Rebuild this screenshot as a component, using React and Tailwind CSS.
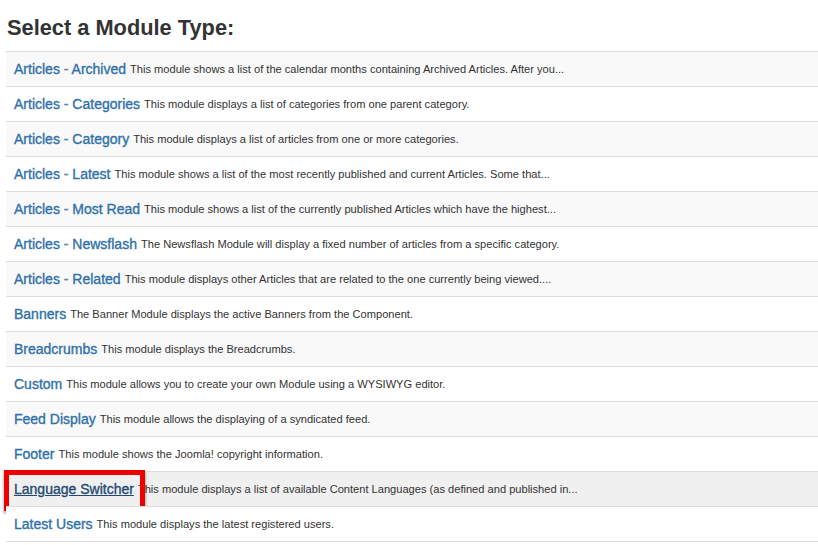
import React from 'react';

const modules = [
  ['Articles', 'Archived', 'This module shows a list of the calendar months containing Archived Articles. After you...'],
  ['Articles', 'Categories', 'This module displays a list of categories from one parent category.'],
  ['Articles', 'Category', 'This module displays a list of articles from one or more categories.'],
  ['Articles', 'Latest', 'This module shows a list of the most recently published and current Articles. Some that...'],
  ['Articles', 'Most Read', 'This module shows a list of the currently published Articles which have the highest...'],
  ['Articles', 'Newsflash', 'The Newsflash Module will display a fixed number of articles from a specific category.'],
  ['Articles', 'Related', 'This module displays other Articles that are related to the one currently being viewed....'],
  ['Banners', null, 'The Banner Module displays the active Banners from the Component.'],
  ['Breadcrumbs', null, 'This module displays the Breadcrumbs.'],
  ['Custom', null, 'This module allows you to create your own Module using a WYSIWYG editor.'],
  ['Feed Display', null, 'This module allows the displaying of a syndicated feed.'],
  ['Footer', null, 'This module shows the Joomla! copyright information.'],
  ['Language Switcher', null, 'This module displays a list of available Content Languages (as defined and published in...'],
  ['Latest Users', null, 'This module displays the latest registered users.'],
];

const App = () => {
  return (
    <div className="min-h-[545px] bg-white pl-[6px] font-['Liberation_Sans',Arial,sans-serif] text-[#333]">
      <h2 className="pl-[1px] pt-[12px] pb-[8px] text-[21.8px] leading-[31px] font-bold">Select a Module Type:</h2>
      <ul className="border-b border-[#ddd]">
        {modules.map(([name, sub, desc], index) => {
          const active = name === 'Language Switcher';
          return (
            <li
              key={index}
              className={`relative flex h-[35px] items-center whitespace-nowrap border-t border-[#ddd] px-[8px] ${
                active ? 'bg-[#f0f0f0]' : index % 2 === 0 ? 'bg-[#f9f9f9]' : 'bg-white'
              }`}
            >
              <a
                href="#"
                className={`text-[14px] ${active ? 'text-[#1f4b74] underline' : 'text-[#3071a9]'}`}
                style={{ WebkitTextStroke: '0.35px currentColor' }}
              >
                {name}
                {sub && (
                  <>
                    <span className="text-[#5a86ad]"> - </span>
                    {sub}
                  </>
                )}
              </a>
              <span className="ml-[4px] text-[11.1px]">{desc}</span>
              {active && (
                <div className="absolute left-[-2px] top-[-2px] h-[41px] w-[141px] border-[5px] border-[#ee0000] shadow-[0_2px_3px_rgba(0,0,0,0.45)]" />
              )}
            </li>
          );
        })}
      </ul>
    </div>
  );
};

export default App;
